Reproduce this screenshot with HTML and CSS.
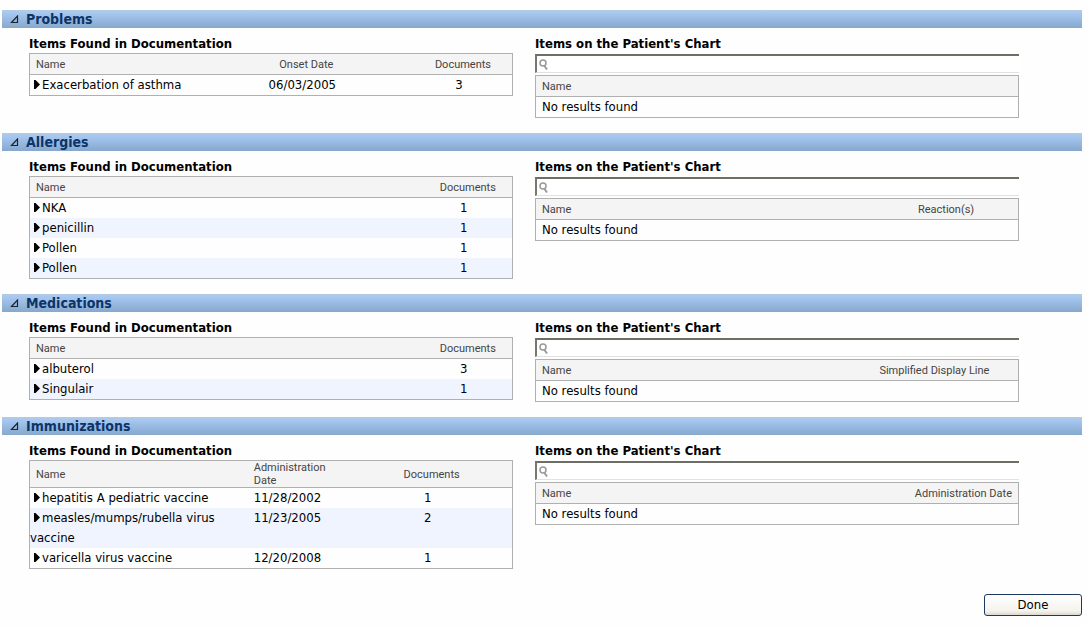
FILE: index.html
```html
<!DOCTYPE html>
<html lang="en">
<head>
    <meta charset="UTF-8">
    <meta name="viewport" content="width=device-width, initial-scale=1.0">
    <title>Documentation Items</title>
    <link rel="stylesheet" href="styles.css">
</head>
<body>
    <svg class="defs" width="0" height="0" aria-hidden="true">
        <symbol id="open" viewBox="0 0 9 9"><path d="M1.5 7.5H7.5V1Z" fill="none" stroke="#1c2530" stroke-width="1.2"/></symbol>
        <symbol id="arrow" viewBox="0 0 6 9"><path d="M0 0L1.5 0L6 4.5L1.5 9H0Z" fill="#000"/></symbol>
        <symbol id="search" viewBox="0 0 10 12"><circle cx="4" cy="4" r="3" fill="none" stroke="#999" stroke-width="1.5"/><path d="M5.5 7L8 10.5" stroke="#999" stroke-width="2"/></symbol>
    </svg>

    <!-- Problems -->
    <section class="section">
        <h2 class="section-title"><button type="button" aria-expanded="true"><svg class="open"><use href="#open"/></svg>Problems</button></h2>
        <div class="columns">
            <div class="found">
                <h3>Items Found in Documentation</h3>
                <table>
                    <colgroup><col class="w35"><col class="w43"><col class="w22"></colgroup>
                    <thead>
                        <tr><th>Name</th><th class="center">Onset Date</th><th class="center">Documents</th></tr>
                    </thead>
                    <tbody>
                        <tr><td><button type="button" class="expand" aria-label="Expand"><svg><use href="#arrow"/></svg></button>Exacerbation of asthma</td><td class="center">06/03/2005</td><td class="center">3</td></tr>
                    </tbody>
                </table>
            </div>
            <div class="chart">
                <h3>Items on the Patient's Chart</h3>
                <div class="search"><svg><use href="#search"/></svg><input type="text" aria-label="Search problems"></div>
                <table>
                    <thead>
                        <tr><th>Name</th></tr>
                    </thead>
                    <tbody>
                        <tr><td class="empty">No results found</td></tr>
                    </tbody>
                </table>
            </div>
        </div>
    </section>

    <!-- Allergies -->
    <section class="section">
        <h2 class="section-title"><button type="button" aria-expanded="true"><svg class="open"><use href="#open"/></svg>Allergies</button></h2>
        <div class="columns">
            <div class="found">
                <h3>Items Found in Documentation</h3>
                <table>
                    <colgroup><col class="w80"><col class="w20"></colgroup>
                    <thead>
                        <tr><th>Name</th><th class="center">Documents</th></tr>
                    </thead>
                    <tbody>
                        <tr><td><button type="button" class="expand" aria-label="Expand"><svg><use href="#arrow"/></svg></button>NKA</td><td class="center">1</td></tr>
                        <tr><td><button type="button" class="expand" aria-label="Expand"><svg><use href="#arrow"/></svg></button>penicillin</td><td class="center">1</td></tr>
                        <tr><td><button type="button" class="expand" aria-label="Expand"><svg><use href="#arrow"/></svg></button>Pollen</td><td class="center">1</td></tr>
                        <tr><td><button type="button" class="expand" aria-label="Expand"><svg><use href="#arrow"/></svg></button>Pollen</td><td class="center">1</td></tr>
                    </tbody>
                </table>
            </div>
            <div class="chart">
                <h3>Items on the Patient's Chart</h3>
                <div class="search"><svg><use href="#search"/></svg><input type="text" aria-label="Search allergies"></div>
                <table>
                    <colgroup><col class="w78"><col class="w22"></colgroup>
                    <thead>
                        <tr><th>Name</th><th>Reaction(s)</th></tr>
                    </thead>
                    <tbody>
                        <tr><td class="empty" colspan="2">No results found</td></tr>
                    </tbody>
                </table>
            </div>
        </div>
    </section>

    <!-- Medications -->
    <section class="section">
        <h2 class="section-title"><button type="button" aria-expanded="true"><svg class="open"><use href="#open"/></svg>Medications</button></h2>
        <div class="columns">
            <div class="found">
                <h3>Items Found in Documentation</h3>
                <table>
                    <colgroup><col class="w80"><col class="w20"></colgroup>
                    <thead>
                        <tr><th>Name</th><th class="center">Documents</th></tr>
                    </thead>
                    <tbody>
                        <tr><td><button type="button" class="expand" aria-label="Expand"><svg><use href="#arrow"/></svg></button>albuterol</td><td class="center">3</td></tr>
                        <tr><td><button type="button" class="expand" aria-label="Expand"><svg><use href="#arrow"/></svg></button>Singulair</td><td class="center">1</td></tr>
                    </tbody>
                </table>
            </div>
            <div class="chart">
                <h3>Items on the Patient's Chart</h3>
                <div class="search"><svg><use href="#search"/></svg><input type="text" aria-label="Search medications"></div>
                <table>
                    <colgroup><col class="w70"><col class="w30"></colgroup>
                    <thead>
                        <tr><th>Name</th><th>Simplified Display Line</th></tr>
                    </thead>
                    <tbody>
                        <tr><td class="empty" colspan="2">No results found</td></tr>
                    </tbody>
                </table>
            </div>
        </div>
    </section>

    <!-- Immunizations -->
    <section class="section">
        <h2 class="section-title"><button type="button" aria-expanded="true"><svg class="open"><use href="#open"/></svg>Immunizations</button></h2>
        <div class="columns">
            <div class="found">
                <h3>Items Found in Documentation</h3>
                <table>
                    <colgroup><col class="w46"><col class="w19"><col class="w35"></colgroup>
                    <thead>
                        <tr><th>Name</th><th class="date">Administration<br>Date</th><th class="center">Documents</th></tr>
                    </thead>
                    <tbody>
                        <tr><td><button type="button" class="expand" aria-label="Expand"><svg><use href="#arrow"/></svg></button>hepatitis A pediatric vaccine</td><td class="date">11/28/2002</td><td class="center">1</td></tr>
                        <tr><td><button type="button" class="expand" aria-label="Expand"><svg><use href="#arrow"/></svg></button>measles/mumps/rubella virus vaccine</td><td class="date">11/23/2005</td><td class="center">2</td></tr>
                        <tr><td><button type="button" class="expand" aria-label="Expand"><svg><use href="#arrow"/></svg></button>varicella virus vaccine</td><td class="date">12/20/2008</td><td class="center">1</td></tr>
                    </tbody>
                </table>
            </div>
            <div class="chart">
                <h3>Items on the Patient's Chart</h3>
                <div class="search"><svg><use href="#search"/></svg><input type="text" aria-label="Search immunizations"></div>
                <table>
                    <colgroup><col class="w70"><col class="w30"></colgroup>
                    <thead>
                        <tr><th>Name</th><th class="right">Administration Date</th></tr>
                    </thead>
                    <tbody>
                        <tr><td class="empty" colspan="2">No results found</td></tr>
                    </tbody>
                </table>
            </div>
        </div>
    </section>

    <div class="actions">
        <button type="button" class="done">Done</button>
    </div>
</body>
</html>
```
FILE: styles.css
```css
body {
    margin: 10px 5px 8px 2px;
    background: #fefefe;
    color: #000;
    font-family: Tahoma, "DejaVu Sans Condensed", "DejaVu Sans", sans-serif;
    font-size: 13px;
    line-height: 20px;
}
button {
    margin: 0;
    padding: 0;
    border: 0;
    background: none;
    color: inherit;
    font: inherit;
}
.defs {
    display: block;
}
.section {
    margin-bottom: 15px;
}
.section-title {
    margin: 0;
    height: 18px;
    background: linear-gradient(#b4cbe4, #a5c6f0 20%, #86a8cc);
    color: #0c3468;
    font-size: 14px;
    line-height: 18px;
}
.section-title button {
    display: flex;
    align-items: center;
    height: 18px;
    padding-left: 8px;
    font-weight: bold;
}
.open {
    width: 9px;
    height: 9px;
    margin-right: 7px;
}
.columns {
    display: grid;
    grid-template-columns: 1fr 1fr;
    gap: 22px;
    align-items: start;
    padding: 7px 63px 0 27px;
}
h3 {
    margin: 0;
    font-size: 13px;
    line-height: 18px;
}
table {
    width: 100%;
    table-layout: fixed;
    border: 1px solid #b0b0b0;
    border-spacing: 0;
}
th {
    height: 20px;
    padding: 0 0 0 6px;
    border-bottom: 1px solid #b0b0b0;
    background: #f4f4f4;
    color: #444;
    font-family: Tahoma, Roboto, sans-serif;
    font-size: 11px;
    font-weight: normal;
    line-height: 13px;
    text-align: left;
    white-space: nowrap;
}
td {
    padding: 0;
    vertical-align: top;
}
.found tbody tr:nth-child(even) {
    background: #f0f4ff;
}
.center {
    text-align: center;
}
th.center {
    padding-left: 8px;
}
.right {
    padding-right: 6px;
    text-align: right;
}
.date {
    padding-left: 2px;
}
.empty {
    padding-left: 6px;
}
.expand {
    margin: 0 2px 0 4px;
}
.expand svg {
    display: block;
    width: 6px;
    height: 9px;
}
.search {
    display: flex;
    margin: 1px 0 2px;
    border-top: 2px solid #6e6e66;
    border-left: 2px solid #77776f;
    border-bottom: 1px solid #e2e2e0;
    background: #fff;
}
.search svg {
    width: 10px;
    height: 12px;
    margin: 3px 2px 0;
}
.search input {
    flex: 1;
    min-width: 0;
    height: 16px;
    padding: 0;
    border: 0;
    background: none;
    font: inherit;
    outline: none;
}
.w19 { width: 19%; }
.w20 { width: 20%; }
.w22 { width: 22%; }
.w30 { width: 30%; }
.w35 { width: 35%; }
.w43 { width: 43%; }
.w46 { width: 46%; }
.w70 { width: 70%; }
.w78 { width: 78%; }
.w80 { width: 80%; }
.actions {
    display: flex;
    justify-content: flex-end;
    padding-top: 10px;
}
.done {
    width: 98px;
    height: 22px;
    border: 1px solid #1c3a5e;
    border-radius: 3px;
    background: linear-gradient(#fff, #f4f3ee 80%, #dcd8cf);
    line-height: 20px;
}
```
